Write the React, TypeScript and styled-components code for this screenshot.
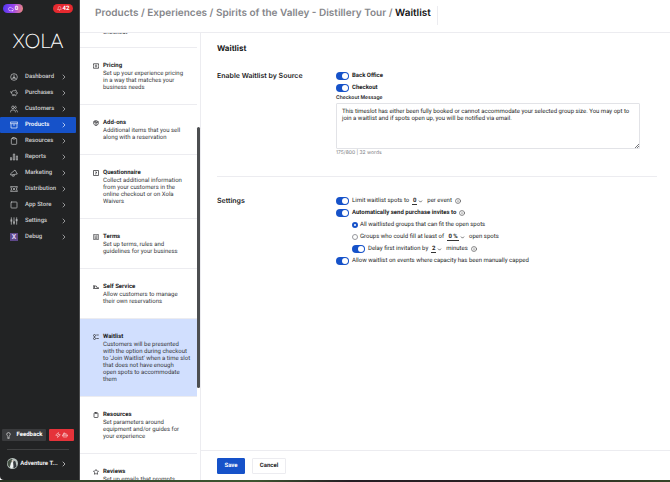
import React, { useId, useState } from "react";
import styled, { createGlobalStyle } from "styled-components";
import {
  PiggyBank, Users, Clipboard, Square,
  ChevronRight, ChevronDown, Package, Star, Info, Bell, Cloud, Lightbulb, Zap, Bot,
} from "lucide-react";
import type { LucideIcon } from "lucide-react";

const GlobalStyle = createGlobalStyle`
  * { box-sizing: border-box; }
  body { margin: 0; background: #fff; color: #242526; font: 6px/8px Roboto, "Liberation Sans", sans-serif; text-rendering: geometricPrecision; }
  button, input, select, textarea { font: inherit; color: inherit; margin: 0; text-rendering: inherit; }
  h1, h2, h3, p { margin: 0; }
  a { color: inherit; text-decoration: none; }
  svg { flex: none; display: block; }
`;

const Page = styled.div`
  height: 100vh;
  display: flex;
  flex-direction: column;
  overflow: hidden;
`;
const Shell = styled.div`
  flex: 1;
  min-height: 0;
  display: flex;
`;
const Desktop = styled.div`
  flex: none;
  height: 2px;
  background: linear-gradient(90deg, #263322, #34472b 12%, #3d5630 38%, #251e24 52%, #2a2023 75%, #354426);
`;

const Sidebar = styled.aside`
  flex: none;
  width: 80px;
  display: flex;
  flex-direction: column;
  background: #222324;
  color: #d5d6d7;
  border-right: 1px solid #4a4b4c;
  border-bottom-left-radius: 4px;
`;
const Badges = styled.div`
  display: flex;
  justify-content: space-between;
  padding: 4px 6px 0 3px;
`;
const Badge = styled.button<{ $tone: "violet" | "red" }>`
  display: flex;
  align-items: center;
  justify-content: center;
  gap: 1px;
  width: 20px;
  height: 9px;
  padding: 0;
  border: 0;
  border-radius: 5px;
  color: #fff;
  font-size: 6px;
  font-weight: 700;
  line-height: 9px;
  background: ${(p) => (p.$tone === "red" ? "#e5292f" : "linear-gradient(100deg, #4c36f0, #9b45ee 50%, #f28a7c)")};
`;
const Logo = styled.a`
  margin: 16px 0 16px;
  padding-right: 3px;
  text-align: center;
  font: 300 20px/24px Lato, sans-serif;
  color: #fff;
`;
const Nav = styled.nav`
  display: flex;
  flex-direction: column;
  padding-right: 3px;
`;
const NavLink = styled.a<{ $active?: boolean }>`
  display: flex;
  align-items: center;
  height: 16px;
  padding: 0 8px 0 10px;
  font-size: 6px;
  font-weight: 500;
  color: ${(p) => (p.$active ? "#fff" : "#cfd0d1")};
  background: ${(p) => (p.$active ? "#1652c9" : "transparent")};
  border-radius: 1px;
  span { flex: 1; margin-left: 7px; }
`;
const DebugMark = styled.b`
  flex: none;
  width: 8px;
  height: 8px;
  background: #5d4788;
  color: #ddd0f2;
  text-align: center;
  font-size: 7px;
  line-height: 8px;
`;
const SideFooter = styled.div`
  margin-top: auto;
  padding: 0 5px 11px 2px;
`;
const FooterButtons = styled.div`
  display: flex;
  gap: 3px;
`;
const FooterButton = styled.button<{ $alert?: boolean }>`
  display: flex;
  align-items: center;
  justify-content: center;
  gap: ${(p) => (p.$alert ? "1px" : "4px")};
  flex: ${(p) => (p.$alert ? "0 0 25px" : "1")};
  height: 12px;
  padding: 0;
  border: 0;
  border-radius: 1px;
  color: #fff;
  font-size: 6px;
  font-weight: 700;
  background: ${(p) => (p.$alert ? "#e5333a" : "#3a3b3d")};
`;
const Account = styled.button`
  display: flex;
  align-items: center;
  justify-content: space-between;
  width: 62px;
  margin: 8px 0 0 5px;
  padding: 8px 1px 0 0;
  border: 0;
  border-top: 1px solid #404142;
  background: none;
  font-size: 6px;
  font-weight: 700;
  color: #f0f0f0;
`;

const Main = styled.main`
  flex: 1;
  min-width: 0;
  display: flex;
  flex-direction: column;
`;
const TopBar = styled.header`
  flex: none;
  display: flex;
  height: 33px;
  padding: 6px 15px;
  border-bottom: 1px solid #ececf0;
`;
const Crumbs = styled.nav`
  padding-right: 6px;
  height: 19px;
  border-right: 1px solid #ececf0;
  font-family: Inter, sans-serif;
  font-size: 10px;
  line-height: 15px;
  font-weight: 600;
  color: #85868a;
  white-space: pre;
  b { font-weight: 600; color: #141415; }
`;
const Body = styled.div`
  flex: 1;
  min-height: 0;
  display: flex;
`;
const Menu = styled.div`
  flex: none;
  display: flex;
  width: 121px;
  border-right: 1px solid #ececf0;
`;
const MenuList = styled.div`
  flex: 1;
  overflow: hidden;
`;
const MenuClip = styled.div`
  margin-top: -19px;
`;
const MenuTail = styled.p`
  padding: 15px 10px 11px 23px;
  border-bottom: 1px solid #ececf0;
  line-height: 7px;
  color: #35363a;
`;
const ScrollTrack = styled.div`
  width: 3px;
  padding-top: 94px;
`;
const ScrollThumb = styled.div`
  height: 261px;
  border-radius: 2px;
  background: #4c4e50;
`;
const MenuItem = styled.a<{ $active?: boolean }>`
  display: flex;
  gap: 4px;
  padding: 14px 4px 13px 13px;
  border-bottom: 1px solid #ececf0;
  background: ${(p) => (p.$active ? "#d1dffe" : "#fff")};
  color: #35363a;
  line-height: 7px;
  svg { margin-top: 1px; }
  b { display: block; line-height: 8px; font-weight: 700; color: #1b1b1d; }
  p { white-space: pre; }
`;

const Panel = styled.section`
  flex: 1;
  min-width: 0;
  display: flex;
  flex-direction: column;
`;
const Form = styled.form`
  flex: 1;
  display: flex;
  flex-direction: column;
  padding: 9px 13px 0 16px;
`;
const Title = styled.h1`
  font-family: Inter, sans-serif;
  font-size: 8px;
  line-height: 12px;
  font-weight: 700;
  color: #1b1b1d;
`;
const Group = styled.section`
  display: grid;
  grid-template-columns: 119px 1fr;
  padding: 16px 0 19px;
  & + & { padding-top: 18px; border-top: 1px solid #ececf0; }
`;
const GroupTitle = styled.h2`
  font-family: Inter, sans-serif;
  font-size: 7px;
  line-height: 12px;
  font-weight: 600;
  color: #1b1b1d;
`;
const Fields = styled.div`
  display: flex;
  flex-direction: column;
  min-width: 0;
  padding-right: 17px;
`;
const Line = styled.div<{ $indent?: boolean; $strong?: boolean }>`
  display: flex;
  align-items: center;
  gap: 3px;
  height: 12px;
  padding-left: ${(p) => (p.$indent ? "16px" : "0")};
  font-weight: ${(p) => (p.$strong ? 700 : 400)};
  white-space: nowrap;
`;
const Toggle = styled.input`
  appearance: none;
  flex: none;
  display: flex;
  align-items: center;
  width: 13px;
  height: 8px;
  padding: 1px;
  border-radius: 4px;
  background: #a9abb0;
  &::before { content: ""; width: 6px; height: 6px; border-radius: 50%; background: #fff; }
  &:checked { background: #1652c9; justify-content: flex-end; }
`;
const Radio = styled.input`
  appearance: none;
  flex: none;
  width: 6px;
  height: 6px;
  border: 1px solid #96989d;
  border-radius: 50%;
  background: #fff;
  & + label { margin-left: -1px; }
  &:checked { border: 2px solid #1652c9; }
`;
const Picker = styled.span<{ $wide?: boolean }>`
  display: flex;
  align-items: center;
  gap: 1px;
  margin-right: 1px;
  select {
    appearance: none;
    width: ${(p) => (p.$wide ? "12px" : "5px")};
    height: 8px;
    padding: 0;
    border: 0;
    border-bottom: 1px solid #333;
    border-radius: 0;
    background: none;
    font-weight: 700;
    text-align: center;
    line-height: 7px;
  }
`;
const MessageLabel = styled.label`
  font-family: Inter, sans-serif;
  font-size: 5px;
  line-height: 8px;
  font-weight: 600;
`;
const Message = styled.textarea`
  width: 100%;
  height: 46px;
  margin-top: 1px;
  padding: 4px 5px;
  border: 1px solid #e2e3e7;
  border-radius: 1px;
  outline: 0;
  background: #fff;
  line-height: 7px;
  resize: none;
`;
const MessageBox = styled.div`
  position: relative;
  display: flex;
  svg { position: absolute; right: 1px; bottom: 1px; }
`;
const Count = styled.p`
  font-family: Inter, sans-serif;
  font-size: 5px;
  line-height: 8px;
  color: #7b7d82;
`;
const Actions = styled.footer`
  flex: none;
  display: flex;
  gap: 7px;
  padding: 7px 16px 6px;
  border-top: 1px solid #ececf0;
`;
const Action = styled.button<{ $primary?: boolean }>`
  width: ${(p) => (p.$primary ? "28px" : "34px")};
  height: 16px;
  padding: 0;
  border: 1px solid ${(p) => (p.$primary ? "#1652c9" : "#ececf0")};
  border-radius: 1px;
  background: ${(p) => (p.$primary ? "#1652c9" : "#fff")};
  color: ${(p) => (p.$primary ? "#fff" : "#242526")};
  font-size: 6px;
  font-weight: 700;
`;

const GaugeIcon = () => (
  <svg width="8" height="8" viewBox="0 0 24 24" fill="none" stroke="currentColor" strokeWidth="2">
    <circle cx="12" cy="12" r="10" /><path d="M12 5v9M5 17l7-3 7 3" /><circle cx="12" cy="14" r="2" />
  </svg>
);
const DistributionIcon = () => (
  <svg width="8" height="8" viewBox="0 0 24 24" fill="none" stroke="currentColor" strokeWidth="2">
    <path d="M1 5h22M1 19h22M3 5v5l3 2-3 2v5M21 5v5l-3 2 3 2v5M8 8l8 8M16 8l-8 8" />
  </svg>
);
const ReportsIcon = () => (
  <svg width="8" height="8" viewBox="0 0 24 24" fill="none" stroke="currentColor" strokeWidth="2">
    <path d="M1 14h4v7H1zM10 3h4v18h-4zM19 9h4v12h-4z" />
  </svg>
);
const MarketingIcon = () => (
  <svg width="8" height="8" viewBox="0 0 24 24" fill="none" stroke="currentColor" strokeWidth="2">
    <path d="M15 3l7 12-20 3v-4zM6 18l2 4 5-1-1-4" />
  </svg>
);
const ProductsIcon = () => (
  <svg width="8" height="8" viewBox="0 0 24 24" fill="none" stroke="currentColor" strokeWidth="2">
    <path d="M1 3h22v5H1zM3 8v13h18V8M9 12h6" />
  </svg>
);
const SettingsIcon = () => (
  <svg width="8" height="8" viewBox="0 0 24 24" fill="none" stroke="currentColor" strokeWidth="2">
    <path d="M4 1v22M12 1v22M20 1v22M1 9h6M9 15h6M17 8h6M1 12h6M9 18h6M17 11h6" />
  </svg>
);
const PricingIcon = () => (
  <svg width="6" height="6" viewBox="0 0 24 24" fill="none" stroke="currentColor" strokeWidth="3">
    <path d="M2 3h20v6l-2 3 2 3v6H2v-6l2-3-2-3zM8 9h8M8 15h8" />
  </svg>
);
const QuestionIcon = () => (
  <svg width="6" height="6" viewBox="0 0 24 24" fill="none" stroke="currentColor" strokeWidth="3">
    <path d="M2 2h20v20H2zM9 8h5v4h-3v3M11 17v2" />
  </svg>
);
const TermsIcon = () => (
  <svg width="6" height="6" viewBox="0 0 24 24" fill="none" stroke="currentColor" strokeWidth="3">
    <path d="M3 1h18v22H3zM7 7h3M13 7h4M7 12h10M7 17h10" />
  </svg>
);
const ServiceIcon = () => (
  <svg width="6" height="6" viewBox="0 0 24 24" fill="none" stroke="currentColor" strokeWidth="3">
    <path d="M1 7h5v11H1zM6 8h7l3 5M6 18h17v-3h-9" />
  </svg>
);
const WaitlistIcon = () => (
  <svg width="6" height="6" viewBox="0 0 24 24" fill="none" stroke="currentColor" strokeWidth="3">
    <circle cx="6" cy="6" r="4" /><circle cx="6" cy="18" r="4" /><path d="M13 4h10M13 18h10M6 10v4" />
  </svg>
);
const Avatar = () => (
  <svg width="11" height="11" viewBox="0 0 22 22">
    <circle cx="11" cy="11" r="11" fill="#b9c2bf" />
    <path d="M1 8q4-7 10-6l-2 8-3 9q-5-3-5-11z" fill="#455144" />
    <path d="M13 5l4 2 2 10-5 4-3-6z" fill="#35393d" />
    <path d="M8 9l4-1 1 9-4 4-3-3z" fill="#f1f3f4" />
    <circle cx="11" cy="6" r="2" fill="#e2d5c9" />
  </svg>
);

const stock = (Icon: LucideIcon, size = 8) => () => <Icon size={size} strokeWidth={size < 8 ? 3 : 2} />;

const navItems: { label: string; icon: React.ComponentType; active?: boolean }[] = [
  { label: "Dashboard", icon: GaugeIcon },
  { label: "Purchases", icon: stock(PiggyBank) },
  { label: "Customers", icon: stock(Users) },
  { label: "Products", icon: ProductsIcon, active: true },
  { label: "Resources", icon: stock(Clipboard) },
  { label: "Reports", icon: ReportsIcon },
  { label: "Marketing", icon: MarketingIcon },
  { label: "Distribution", icon: DistributionIcon },
  { label: "App Store", icon: stock(Square) },
  { label: "Settings", icon: SettingsIcon },
  { label: "Debug", icon: () => <DebugMark>X</DebugMark> },
];

const menuItems: { label: string; text: string; icon: React.ComponentType; active?: boolean }[] = [
  { label: "Pricing", text: "Set up your experience pricing\nin a way that matches your\nbusiness needs", icon: PricingIcon },
  { label: "Add-ons", text: "Additional items that you sell\nalong with a reservation", icon: stock(Package, 6) },
  { label: "Questionnaire", text: "Collect additional information\nfrom your customers in the\nonline checkout or on Xola\nWaivers", icon: QuestionIcon },
  { label: "Terms", text: "Set up terms, rules and\nguidelines for your business", icon: TermsIcon },
  { label: "Self Service", text: "Allow customers to manage\ntheir own reservations", icon: ServiceIcon },
  { label: "Waitlist", text: "Customers will be presented\nwith the option during checkout\nto 'Join Waitlist' when a time slot\nthat does not have enough\nopen spots to accommodate\nthem", icon: WaitlistIcon, active: true },
  { label: "Resources", text: "Set parameters around\nequipment and/or guides for\nyour experience", icon: stock(Clipboard, 6) },
  { label: "Reviews", text: "Set up emails that prompts", icon: stock(Star, 6) },
];

function Switch({ label }: { label: string }) {
  const id = useId();
  return (
    <>
      <Toggle type="checkbox" role="switch" id={id} defaultChecked />
      <label htmlFor={id}>{label}</label>
    </>
  );
}

function Choice({ label, value, wide }: { label: string; value: string; wide?: boolean }) {
  return (
    <Picker $wide={wide}>
      <select aria-label={label} defaultValue={value}><option>{value}</option></select>
      <ChevronDown size={5} strokeWidth={3} />
    </Picker>
  );
}

export default function App() {
  const [message, setMessage] = useState(
    "This timeslot has either been fully booked or cannot accommodate your selected group size. You may opt to join a waitlist and if spots open up, you will be notified via email."
  );
  return (
    <Page>
      <GlobalStyle />
      <Shell>
        <Sidebar>
          <Badges>
            <Badge $tone="violet"><Cloud size={6} />0</Badge>
            <Badge $tone="red"><Bell size={5} />42</Badge>
          </Badges>
          <Logo href="#">XOLA</Logo>
          <Nav>
            {navItems.map(({ label, icon: Icon, active }) => (
              <NavLink key={label} href="#" $active={active}>
                <Icon /><span>{label}</span><ChevronRight size={8} strokeWidth={2} />
              </NavLink>
            ))}
          </Nav>
          <SideFooter>
            <FooterButtons>
              <FooterButton type="button"><Lightbulb size={7} />Feedback</FooterButton>
              <FooterButton type="button" $alert aria-label="Alerts"><Zap size={6} /><Bot size={6} /></FooterButton>
            </FooterButtons>
            <Account type="button"><Avatar />Adventure T...<ChevronRight size={8} /></Account>
          </SideFooter>
        </Sidebar>
        <Main>
          <TopBar>
            <Crumbs>
              <a href="#">Products</a> / <a href="#">Experiences</a> / <a href="#">Spirits of the Valley - Distillery Tour</a> / <b>Waitlist</b>
            </Crumbs>
          </TopBar>
          <Body>
            <Menu>
              <MenuList>
                <MenuClip>
                  <MenuTail>checkout</MenuTail>
                  {menuItems.map(({ label, text, icon: Icon, active }) => (
                    <MenuItem key={label} href="#" $active={active}>
                      <Icon /><div><b>{label}</b><p>{text}</p></div>
                    </MenuItem>
                  ))}
                </MenuClip>
              </MenuList>
              <ScrollTrack><ScrollThumb /></ScrollTrack>
            </Menu>
            <Panel>
              <Form id="waitlist">
                <Title>Waitlist</Title>
                <Group>
                  <GroupTitle>Enable Waitlist by Source</GroupTitle>
                  <Fields>
                    <Line $strong><Switch label="Back Office" /></Line>
                    <Line $strong><Switch label="Checkout" /></Line>
                    <MessageLabel htmlFor="message">Checkout Message</MessageLabel>
                    <MessageBox>
                      <Message id="message" value={message} onChange={(e) => setMessage(e.target.value)} />
                      <svg width="4" height="4" viewBox="0 0 4 4" stroke="#77797d" strokeWidth="1"><path d="M0 4l4-4M2 4l2-2" /></svg>
                    </MessageBox>
                    <Count>175/800 | 32 words</Count>
                  </Fields>
                </Group>
                <Group>
                  <GroupTitle>Settings</GroupTitle>
                  <Fields>
                    <Line><Switch label="Limit waitlist spots to" /><Choice label="Spots" value="0" />per event<Info size={6} /></Line>
                    <Line $strong><Switch label="Automatically send purchase invites to" /><Info size={6} /></Line>
                    <Line $indent><Radio type="radio" name="invite" id="all" defaultChecked /><label htmlFor="all">All waitlisted groups that can fit the open spots</label></Line>
                    <Line $indent><Radio type="radio" name="invite" id="fill" /><label htmlFor="fill">Groups who could fill at least of</label><Choice label="Share" value="0 %" wide />open spots</Line>
                    <Line $indent><Switch label="Delay first invitation by" /><Choice label="Minutes" value="2" />minutes<Info size={6} /></Line>
                    <Line><Switch label="Allow waitlist on events where capacity has been manually capped" /></Line>
                  </Fields>
                </Group>
              </Form>
              <Actions>
                <Action $primary type="submit" form="waitlist">Save</Action>
                <Action type="button">Cancel</Action>
              </Actions>
            </Panel>
          </Body>
        </Main>
      </Shell>
      <Desktop />
    </Page>
  );
}
